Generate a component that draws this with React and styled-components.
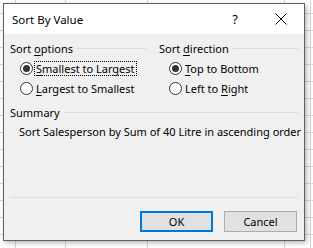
import React from "react";
import styled, { createGlobalStyle } from "styled-components";

const GlobalStyle = createGlobalStyle`
  html, body { margin: 0; padding: 0; }
  body {
    font-family: "Noto Sans", "Open Sans", sans-serif;
    font-size: 11px;
    color: #000;
    background: #fff;
  }
`;

const Sheet = styled.div`
  width: 313px;
  height: 248px;
  box-sizing: border-box;
  padding: 3px 0 0 3px;
  overflow: hidden;
  background-color: #fff;
  background-image:
    linear-gradient(#d6d6d6, #d6d6d6),
    linear-gradient(#d6d6d6, #d6d6d6),
    linear-gradient(#d6d6d6, #d6d6d6),
    linear-gradient(#d6d6d6, #d6d6d6),
    linear-gradient(#d6d6d6, #d6d6d6),
    repeating-linear-gradient(to bottom, transparent 0, transparent 13px, #d6d6d6 13px, #d6d6d6 14px, transparent 14px, transparent 17px);
  background-size: 1px 100%, 1px 100%, 1px 100%, 1px 100%, 1px 100%, 100% 17px;
  background-position: 15px 0, 65px 0, 147px 0, 284px 0, 310px 0, 0 0;
  background-repeat: no-repeat, no-repeat, no-repeat, no-repeat, no-repeat, repeat;
`;

const Dialog = styled.div`
  width: 302px;
  height: 238px;
  box-sizing: border-box;
  border: 1px solid #5f5f5f;
  background: #f0f0f0;
  box-shadow: 2px 2px 5px rgba(0, 0, 0, 0.28);
  display: flex;
  flex-direction: column;
`;

const TitleBar = styled.div`
  height: 30px;
  flex: none;
  background: #fff;
  display: flex;
  align-items: center;
  padding-left: 8px;
`;

const Title = styled.div`
  flex: 1;
  font-size: 11.5px;
  color: #000;
`;

const TitleButton = styled.div`
  width: 46px;
  height: 30px;
  display: flex;
  align-items: center;
  justify-content: center;
  font-size: 13px;
  color: #000;
`;

const Body = styled.div`
  flex: 1;
  display: flex;
  flex-direction: column;
  padding: 6px 6px 8px 6px;
`;

const Columns = styled.div`
  display: grid;
  grid-template-columns: 136px 1fr;
  column-gap: 13px;
`;

const GroupHeader = styled.div`
  display: flex;
  align-items: center;
  gap: 4px;
  height: 16px;
  margin-top: ${(p) => p.$top || 0}px;
`;

const HeaderText = styled.span`
  white-space: nowrap;
`;

const Rule = styled.div`
  flex: 1;
  height: 1px;
  background: #dcdcdc;
`;

const RadioList = styled.div`
  display: flex;
  flex-direction: column;
  padding: 2px 0 0 10px;
`;

const RadioRow = styled.div`
  display: flex;
  align-items: center;
  height: 20px;
  gap: 2px;
`;

const Circle = styled.span`
  width: 11px;
  height: 11px;
  border: 1px solid #333;
  border-radius: 50%;
  background: #fff;
  display: flex;
  align-items: center;
  justify-content: center;
  flex: none;
  &::after {
    content: "";
    display: ${(p) => (p.$checked ? "block" : "none")};
    width: 7px;
    height: 7px;
    border-radius: 50%;
    background: #333;
  }
`;

const RadioLabel = styled.span`
  white-space: nowrap;
  padding: 0 1px;
  line-height: 13px;
  outline: ${(p) => (p.$focus ? "1px dotted #000" : "none")};
`;

const U = styled.span`
  text-decoration: underline;
  text-underline-offset: 2px;
`;

const SummaryText = styled.div`
  margin: 4px 0 0 9px;
  height: 16px;
  line-height: 16px;
  white-space: nowrap;
`;

const Spacer = styled.div`
  flex: 1;
`;

const Separator = styled.div`
  height: 1px;
  background: #dcdcdc;
  margin-bottom: 13px;
`;

const ButtonRow = styled.div`
  display: flex;
  justify-content: flex-end;
  gap: 11px;
  padding-right: 1px;
`;

const Button = styled.div`
  width: 73px;
  height: 21px;
  box-sizing: border-box;
  background: #e1e1e1;
  border: ${(p) => (p.$primary ? "2px solid #0078d7" : "1px solid #adadad")};
  display: flex;
  align-items: center;
  justify-content: center;
  font-size: 11px;
`;

function Radio({ checked, focus, children }) {
  return (
    <RadioRow>
      <Circle $checked={checked} />
      <RadioLabel $focus={focus}>{children}</RadioLabel>
    </RadioRow>
  );
}

export default function App() {
  return (
    <>
      <GlobalStyle />
      <Sheet>
        <Dialog>
          <TitleBar>
            <Title>Sort By Value</Title>
            <TitleButton>?</TitleButton>
            <TitleButton>
              <svg width="12" height="12" viewBox="0 0 12 12">
                <path d="M0.5 0.5 L11.5 11.5 M11.5 0.5 L0.5 11.5" stroke="#000" strokeWidth="1" fill="none" />
              </svg>
            </TitleButton>
          </TitleBar>
          <Body>
            <Columns>
              <div>
                <GroupHeader>
                  <HeaderText>Sort <U>o</U>ptions</HeaderText>
                  <Rule />
                </GroupHeader>
                <RadioList>
                  <Radio checked focus><U>S</U>mallest to Largest</Radio>
                  <Radio><U>L</U>argest to Smallest</Radio>
                </RadioList>
              </div>
              <div>
                <GroupHeader>
                  <HeaderText>Sort <U>d</U>irection</HeaderText>
                  <Rule />
                </GroupHeader>
                <RadioList>
                  <Radio checked><U>T</U>op to Bottom</Radio>
                  <Radio>Left to <U>R</U>ight</Radio>
                </RadioList>
              </div>
            </Columns>
            <GroupHeader $top={6}>
              <HeaderText>Summary</HeaderText>
              <Rule />
            </GroupHeader>
            <SummaryText>Sort Salesperson by Sum of 40 Litre in ascending order</SummaryText>
            <Spacer />
            <Separator />
            <ButtonRow>
              <Button $primary>OK</Button>
              <Button>Cancel</Button>
            </ButtonRow>
          </Body>
        </Dialog>
      </Sheet>
    </>
  );
}
